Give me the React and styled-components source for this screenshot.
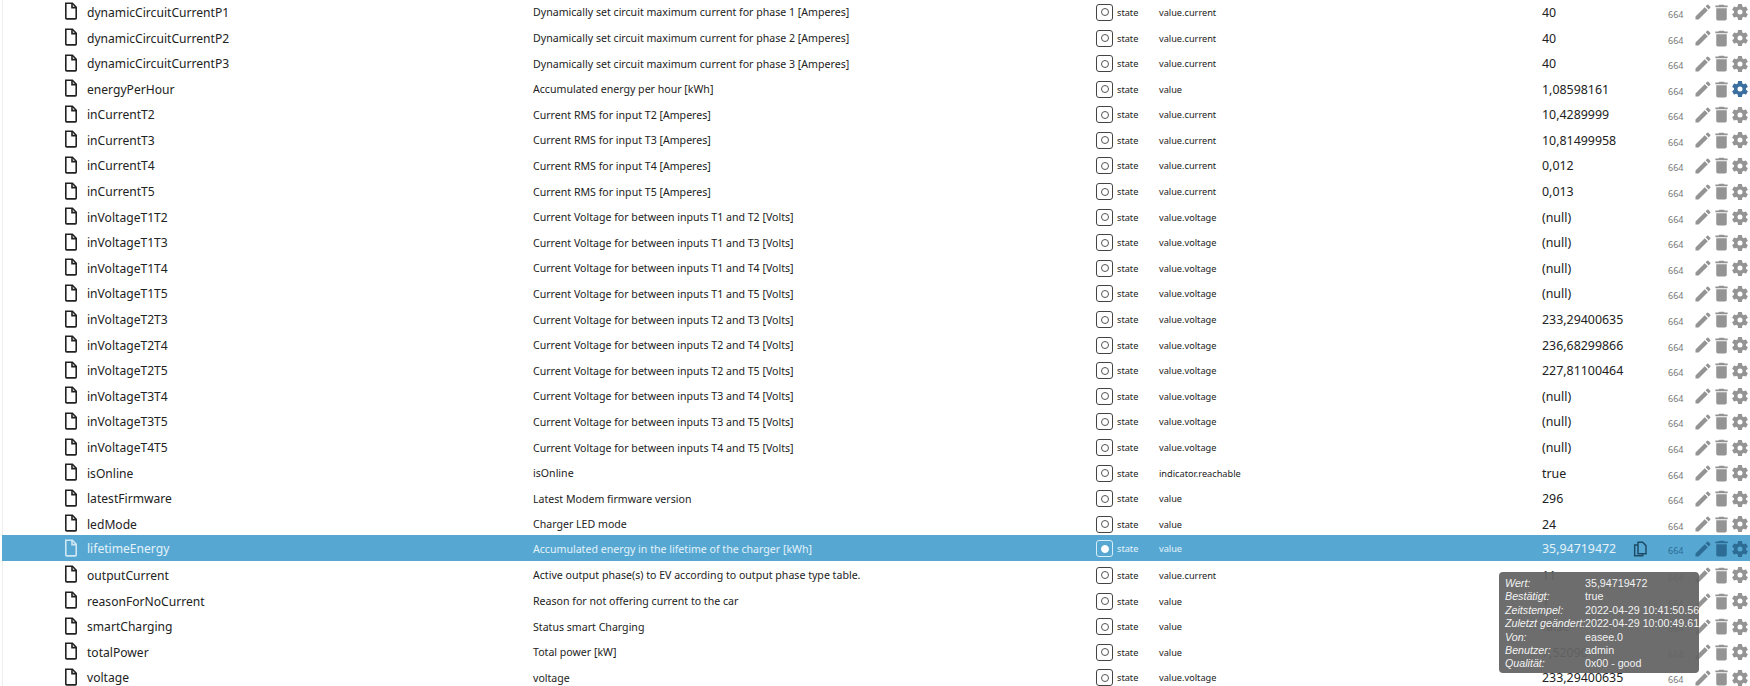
import React from "react";
import styled, { createGlobalStyle } from "styled-components";

const Global = createGlobalStyle`
  html, body { margin: 0; padding: 0; background: #fff; overflow: hidden; height: 686px; }
`;

const Page = styled.div`
  position: relative;
  width: 1750px;
  height: 686px;
  overflow: hidden;
  background: #fff;
  font-family: "Noto Sans", "Open Sans", sans-serif;
`;

const List = styled.div`
  margin-top: -2.4px;
  margin-left: 2px;
`;

const Row = styled.div`
  display: grid;
  grid-template-columns: 61px 23px 446px 563px 21px 42px 383px 90px 36px 25px 18px 19px 20px;
  box-sizing: border-box;
  height: 25.6px;
  padding-top: ${(p) => (p.$selected ? "2px" : "4px")};
  border-left: 1px solid ${(p) => (p.$selected ? "#56a8d3" : "#eee")};
  align-items: center;
  background: ${(p) => (p.$selected ? "#56a8d3" : "#fff")};
  color: ${(p) => (p.$selected ? "#e4f2f9" : "#222")};
`;

const FileCell = styled.div`
  grid-column: 2;
  display: flex;
  margin-top: -2px;
  color: ${(p) => (p.$selected ? "#cfe7f3" : "#222")};
`;

const Name = styled.div`
  font-size: 12.1px;
  white-space: nowrap;
  color: inherit;
`;

const Desc = styled.div`
  font-size: 10.6px;
  white-space: nowrap;
`;

const TypeBox = styled.div`
  box-sizing: border-box;
  width: 17px;
  height: 17px;
  border: 1px solid ${(p) => (p.$selected ? "#d8eef8" : "#444")};
  border-bottom-width: 1.5px;
  border-radius: 3px;
  display: flex;
  align-items: center;
  justify-content: center;
`;

const TypeDot = styled.span`
  box-sizing: border-box;
  width: 8px;
  height: 8px;
  border-radius: 50%;
  border: 1px solid ${(p) => (p.$selected ? "#fff" : "#555")};
  background: ${(p) => (p.$selected ? "#fff" : "transparent")};
`;

const Small = styled.div`
  font-size: 9.2px;
  white-space: nowrap;
`;

const Value = styled.div`
  font-size: 12.4px;
  white-space: nowrap;
  color: ${(p) => (p.$selected ? "#e4f2f9" : "#222")};
`;

const CopyCell = styled.div`
  display: flex;
  color: #1f4a66;
`;

const Acl = styled.div`
  font-size: 9px;
  color: ${(p) => (p.$selected ? "#2d6c94" : "#777")};
  padding-top: 4px;
`;

const Action = styled.div`
  display: flex;
  color: ${(p) => p.$color};
`;

const Tooltip = styled.div`
  position: absolute;
  left: 1499px;
  top: 572px;
  width: 200px;
  height: 101px;
  box-sizing: border-box;
  padding: 5px 0 0 6px;
  background: rgba(100, 100, 100, 0.94);
  border-radius: 4px;
  color: #f2f2f2;
  font-family: "Liberation Sans", Arial, sans-serif;
  font-size: 10.7px;
  overflow: hidden;
`;

const TipRow = styled.div`
  display: grid;
  grid-template-columns: 80px 1fr;
  height: 13.4px;
  line-height: 13.4px;
  white-space: nowrap;
`;

const TipLabel = styled.span`
  font-style: italic;
`;

const FileIcon = () => (
  <svg width="14" height="18" viewBox="0 0 14 18" fill="none" stroke="currentColor" strokeWidth="1.6">
    <path d="M1.8 1.2h6.6l3.8 4v10.9a.8.8 0 0 1-.8.8H2.6a.8.8 0 0 1-.8-.8z" />
    <path d="M8 1.2v4.4h4.2" />
  </svg>
);

const PencilIcon = () => (
  <svg width="20" height="20" viewBox="0 0 24 24" fill="currentColor" style={{ flexShrink: 0 }}>
    <path d="M3 17.25V21h3.75L17.81 9.94l-3.75-3.75L3 17.25zM20.71 7.04a1 1 0 0 0 0-1.41l-2.34-2.34a1 1 0 0 0-1.41 0l-1.83 1.83 3.75 3.75 1.83-1.83z" />
  </svg>
);

const TrashIcon = () => (
  <svg width="21" height="21" viewBox="0 0 24 24" fill="currentColor" style={{ flexShrink: 0 }}>
    <path d="M6 19c0 1.1.9 2 2 2h8c1.1 0 2-.9 2-2V7H6v12zM19 4h-3.5l-1-1h-5l-1 1H5v2h14V4z" />
  </svg>
);

const GearIcon = () => (
  <svg width="20" height="20" viewBox="0 0 24 24" fill="currentColor">
    <path d="M19.14 12.94c.04-.3.06-.61.06-.94s-.02-.64-.07-.94l2.03-1.58a.5.5 0 0 0 .12-.61l-1.92-3.32a.5.5 0 0 0-.59-.22l-2.39.96a7 7 0 0 0-1.62-.94l-.36-2.54a.48.48 0 0 0-.48-.41h-3.84a.48.48 0 0 0-.47.41l-.36 2.54c-.59.24-1.13.57-1.62.94l-2.39-.96a.49.49 0 0 0-.59.22L2.74 8.87a.48.48 0 0 0 .12.61l2.03 1.58c-.05.3-.09.63-.09.94s.02.64.07.94l-2.03 1.58a.5.5 0 0 0-.12.61l1.92 3.32c.12.22.37.29.59.22l2.39-.96c.5.38 1.03.7 1.62.94l.36 2.54c.05.24.24.41.48.41h3.84c.24 0 .44-.17.47-.41l.36-2.54c.59-.24 1.13-.56 1.62-.94l2.39.96c.22.08.47 0 .59-.22l1.92-3.32a.48.48 0 0 0-.12-.61l-2.01-1.58zM12 15a3 3 0 1 1 0-6 3 3 0 0 1 0 6z" fillRule="evenodd" />
  </svg>
);

const CopyIcon = () => (
  <svg width="16" height="16" viewBox="0 0 24 24" fill="none" stroke="currentColor" strokeWidth="2.2">
    <path d="M9 2h7l5 5v12H9z" />
    <path d="M9 6H4v16h12v-3" />
  </svg>
);

const T = (n) => `Current Voltage for between inputs T${n[0]} and T${n[1]} [Volts]`;

const rows = [
  ["dynamicCircuitCurrentP1", "Dynamically set circuit maximum current for phase 1 [Amperes]", "value.current", "40"],
  ["dynamicCircuitCurrentP2", "Dynamically set circuit maximum current for phase 2 [Amperes]", "value.current", "40"],
  ["dynamicCircuitCurrentP3", "Dynamically set circuit maximum current for phase 3 [Amperes]", "value.current", "40"],
  ["energyPerHour", "Accumulated energy per hour [kWh]", "value", "1,08598161", { blue: true }],
  ["inCurrentT2", "Current RMS for input T2 [Amperes]", "value.current", "10,4289999"],
  ["inCurrentT3", "Current RMS for input T3 [Amperes]", "value.current", "10,81499958"],
  ["inCurrentT4", "Current RMS for input T4 [Amperes]", "value.current", "0,012"],
  ["inCurrentT5", "Current RMS for input T5 [Amperes]", "value.current", "0,013"],
  ["inVoltageT1T2", T("12"), "value.voltage", "(null)"],
  ["inVoltageT1T3", T("13"), "value.voltage", "(null)"],
  ["inVoltageT1T4", T("14"), "value.voltage", "(null)"],
  ["inVoltageT1T5", T("15"), "value.voltage", "(null)"],
  ["inVoltageT2T3", T("23"), "value.voltage", "233,29400635"],
  ["inVoltageT2T4", T("24"), "value.voltage", "236,68299866"],
  ["inVoltageT2T5", T("25"), "value.voltage", "227,81100464"],
  ["inVoltageT3T4", T("34"), "value.voltage", "(null)"],
  ["inVoltageT3T5", T("35"), "value.voltage", "(null)"],
  ["inVoltageT4T5", T("45"), "value.voltage", "(null)"],
  ["isOnline", "isOnline", "indicator.reachable", "true"],
  ["latestFirmware", "Latest Modem firmware version", "value", "296"],
  ["ledMode", "Charger LED mode", "value", "24"],
  ["lifetimeEnergy", "Accumulated energy in the lifetime of the charger [kWh]", "value", "35,94719472", { selected: true }],
  ["outputCurrent", "Active output phase(s) to EV according to output phase type table.", "value.current", "11"],
  ["reasonForNoCurrent", "Reason for not offering current to the car", "value", "1"],
  ["smartCharging", "Status smart Charging", "value", "false"],
  ["totalPower", "Total power [kW]", "value", "7,52090"],
  ["voltage", "voltage", "value.voltage", "233,29400635"],
];

const tip = [
  ["Wert:", "35,94719472"],
  ["Bestätigt:", "true"],
  ["Zeitstempel:", "2022-04-29 10:41:50.569"],
  ["Zuletzt geändert:", "2022-04-29 10:00:49.617"],
  ["Von:", "easee.0"],
  ["Benutzer:", "admin"],
  ["Qualität:", "0x00 - good"],
];

export default function App() {
  return (
    <Page>
      <Global />
      <List>
        {rows.map(([name, desc, role, value, opt = {}]) => {
          const sel = !!opt.selected;
          const grey = sel ? "#2d6c94" : "#949494";
          return (
            <Row key={name} $selected={sel}>
              <FileCell $selected={sel}><FileIcon /></FileCell>
              <Name>{name}</Name>
              <Desc>{desc}</Desc>
              <TypeBox $selected={sel}><TypeDot $selected={sel} /></TypeBox>
              <Small>state</Small>
              <Small>{role}</Small>
              <Value $selected={sel}>{value}</Value>
              <CopyCell>{sel && <CopyIcon />}</CopyCell>
              <Acl $selected={sel}>664</Acl>
              <Action $color={grey}><PencilIcon /></Action>
              <Action $color={grey}><TrashIcon /></Action>
              <Action $color={opt.blue ? "#3a6f9f" : grey}><GearIcon /></Action>
            </Row>
          );
        })}
      </List>
      <Tooltip>
        {tip.map(([l, v]) => (
          <TipRow key={l}>
            <TipLabel>{l}</TipLabel>
            <span>{v}</span>
          </TipRow>
        ))}
      </Tooltip>
    </Page>
  );
}
